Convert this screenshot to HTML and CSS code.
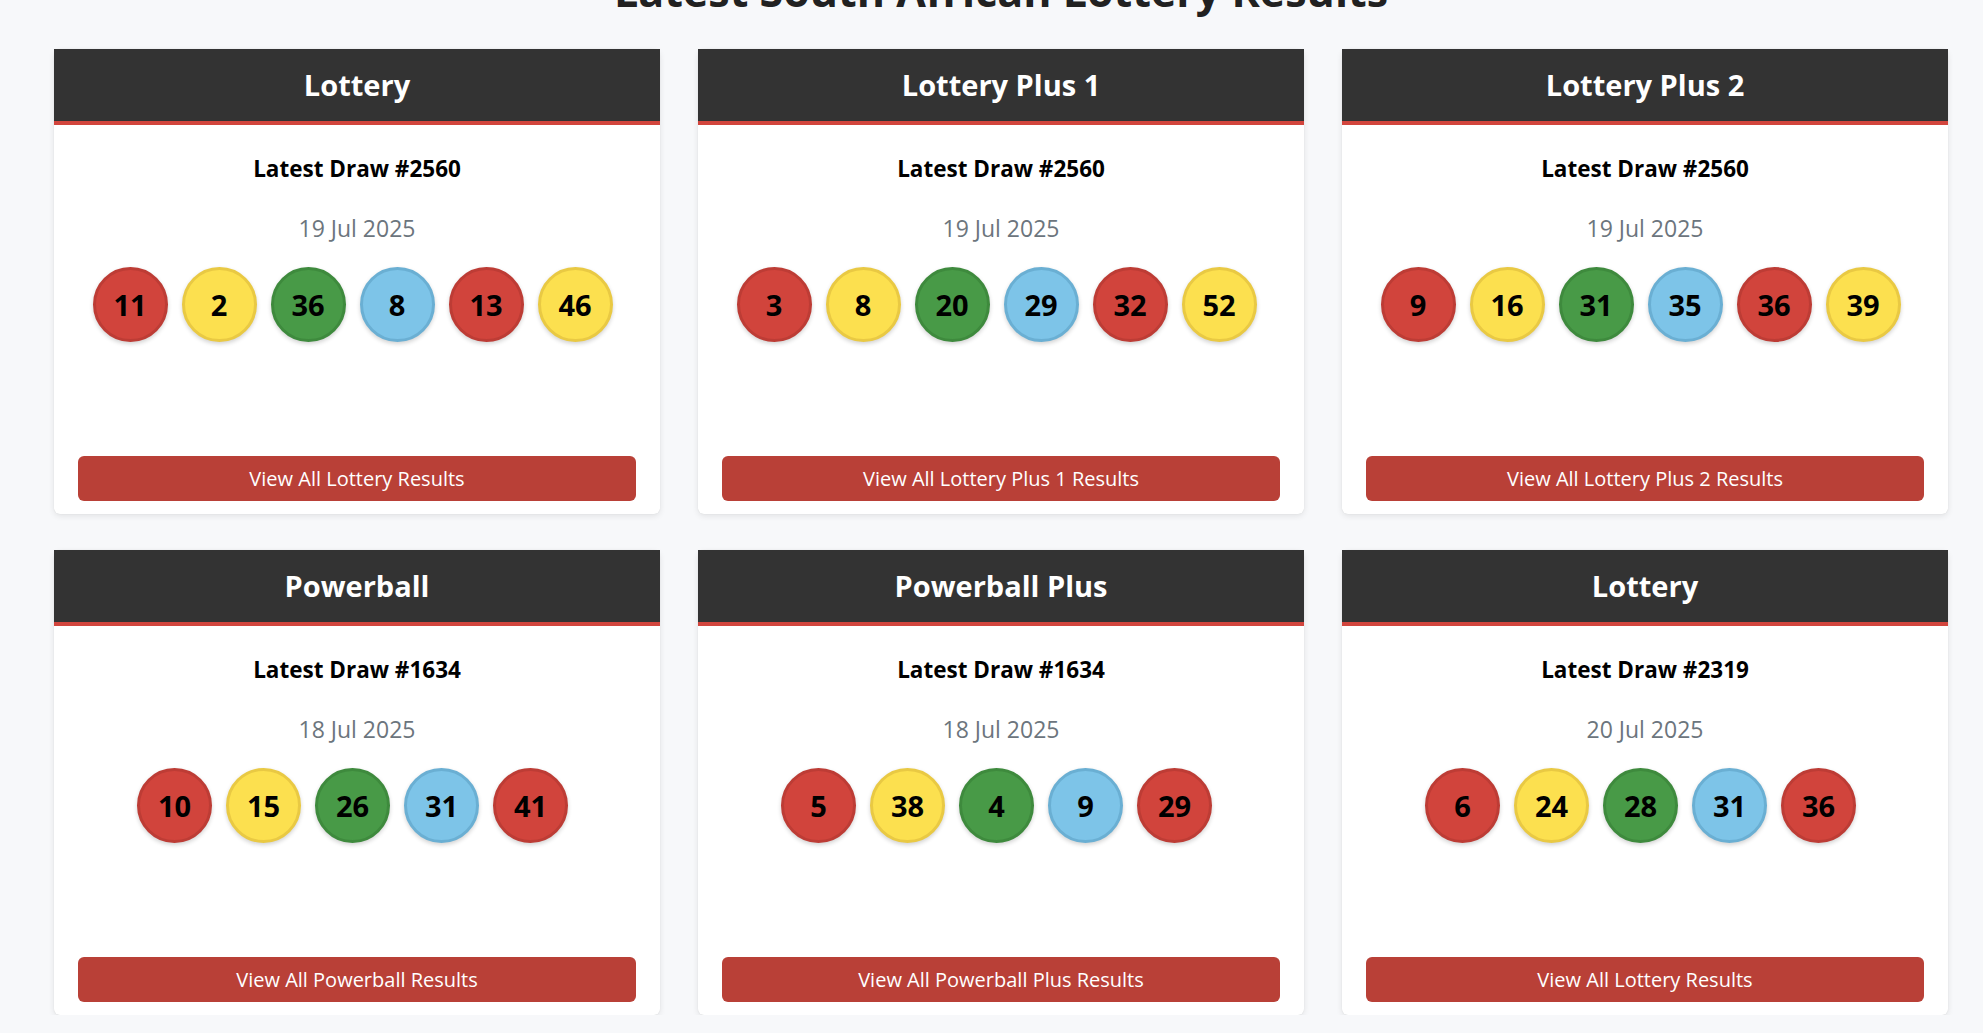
FILE: index.html
```html
<!DOCTYPE html>
<html lang="en">
<head>
<meta charset="utf-8">
<title>Latest South African Lottery Results</title>
<link rel="stylesheet" href="styles.css">
</head>
<body>
<main class="page">
  <h1 class="page-title">Latest South African Lottery Results</h1>
  <div class="grid">
    <section class="card">
      <h2 class="card-header">Lottery</h2>
      <div class="card-body">
        <p class="draw">Latest Draw #2560</p>
        <p class="date">19 Jul 2025</p>
        <div class="balls">
          <span class="ball red">11</span><span class="ball yellow">2</span><span class="ball green">36</span><span class="ball blue">8</span><span class="ball red">13</span><span class="ball yellow">46</span>
        </div>
        <a class="btn" href="#">View All Lottery Results</a>
      </div>
    </section>
    <section class="card">
      <h2 class="card-header">Lottery Plus 1</h2>
      <div class="card-body">
        <p class="draw">Latest Draw #2560</p>
        <p class="date">19 Jul 2025</p>
        <div class="balls">
          <span class="ball red">3</span><span class="ball yellow">8</span><span class="ball green">20</span><span class="ball blue">29</span><span class="ball red">32</span><span class="ball yellow">52</span>
        </div>
        <a class="btn" href="#">View All Lottery Plus 1 Results</a>
      </div>
    </section>
    <section class="card">
      <h2 class="card-header">Lottery Plus 2</h2>
      <div class="card-body">
        <p class="draw">Latest Draw #2560</p>
        <p class="date">19 Jul 2025</p>
        <div class="balls">
          <span class="ball red">9</span><span class="ball yellow">16</span><span class="ball green">31</span><span class="ball blue">35</span><span class="ball red">36</span><span class="ball yellow">39</span>
        </div>
        <a class="btn" href="#">View All Lottery Plus 2 Results</a>
      </div>
    </section>
    <section class="card">
      <h2 class="card-header">Powerball</h2>
      <div class="card-body">
        <p class="draw">Latest Draw #1634</p>
        <p class="date">18 Jul 2025</p>
        <div class="balls">
          <span class="ball red">10</span><span class="ball yellow">15</span><span class="ball green">26</span><span class="ball blue">31</span><span class="ball red">41</span>
        </div>
        <a class="btn" href="#">View All Powerball Results</a>
      </div>
    </section>
    <section class="card">
      <h2 class="card-header">Powerball Plus</h2>
      <div class="card-body">
        <p class="draw">Latest Draw #1634</p>
        <p class="date">18 Jul 2025</p>
        <div class="balls">
          <span class="ball red">5</span><span class="ball yellow">38</span><span class="ball green">4</span><span class="ball blue">9</span><span class="ball red">29</span>
        </div>
        <a class="btn" href="#">View All Powerball Plus Results</a>
      </div>
    </section>
    <section class="card">
      <h2 class="card-header">Lottery</h2>
      <div class="card-body">
        <p class="draw">Latest Draw #2319</p>
        <p class="date">20 Jul 2025</p>
        <div class="balls">
          <span class="ball red">6</span><span class="ball yellow">24</span><span class="ball green">28</span><span class="ball blue">31</span><span class="ball red">36</span>
        </div>
        <a class="btn" href="#">View All Lottery Results</a>
      </div>
    </section>
  </div>
</main>
</body>
</html>
```
FILE: styles.css
```css
* { box-sizing: border-box; }

html, body {
  margin: 0;
  background: #f7f8fa;
  font-family: "Open Sans", "Noto Sans", "Liberation Sans", sans-serif;
  color: #000;
  overflow: hidden;
}

.page {
  padding: 0 35px 0 54px;
}

.page-title {
  margin: -35px 0 32px;
  font-size: 43px;
  line-height: 1.2;
  font-weight: 700;
  text-align: center;
  color: #212121;
}

.grid {
  display: grid;
  grid-template-columns: repeat(3, 1fr);
  column-gap: 38px;
  row-gap: 36px;
}

.card {
  display: flex;
  flex-direction: column;
  min-height: 465px;
  background: #fff;
  border-radius: 6px;
  box-shadow: 0 2px 6px rgba(0, 0, 0, 0.09), 0 0 1px rgba(0, 0, 0, 0.12);
}

.card-header {
  margin: 0;
  height: 76px;
  padding: 18px 10px 0;
  background: #333333;
  border-bottom: 4px solid #d2453d;
  color: #fff;
  font-size: 29px;
  line-height: 36px;
  font-weight: 700;
  text-align: center;
}

.card-body {
  flex: 1;
  display: flex;
  flex-direction: column;
  align-items: stretch;
  padding: 27px 24px 13px;
  text-align: center;
}

.draw {
  margin: 0;
  font-size: 22.5px;
  line-height: 33px;
  font-weight: 700;
}

.date {
  margin: 26px 0 0;
  font-size: 23px;
  line-height: 34px;
  color: #6c757d;
}

.balls {
  display: flex;
  justify-content: center;
  gap: 14px;
  margin-top: 22px;
  padding-right: 9px;
}

.ball {
  width: 75px;
  height: 75px;
  border-radius: 50%;
  border: 3px solid;
  display: flex;
  align-items: center;
  justify-content: center;
  font-size: 29px;
  font-weight: 700;
  color: #000;
  box-shadow: 0 2px 4px rgba(0, 0, 0, 0.18);
}

.ball.red { background: #d1443c; border-color: #bd3c35; }
.ball.yellow { background: #fce04f; border-color: #e9c943; }
.ball.green { background: #489a47; border-color: #3e8a3d; }
.ball.blue { background: #7dc4e8; border-color: #6aafd3; }

.btn {
  margin-top: auto;
  display: block;
  height: 45px;
  padding: 9px 10px;
  background: #b94037;
  color: #fff;
  border-radius: 6px;
  font-size: 20px;
  line-height: 27px;
  text-decoration: none;
  text-align: center;
}
```
